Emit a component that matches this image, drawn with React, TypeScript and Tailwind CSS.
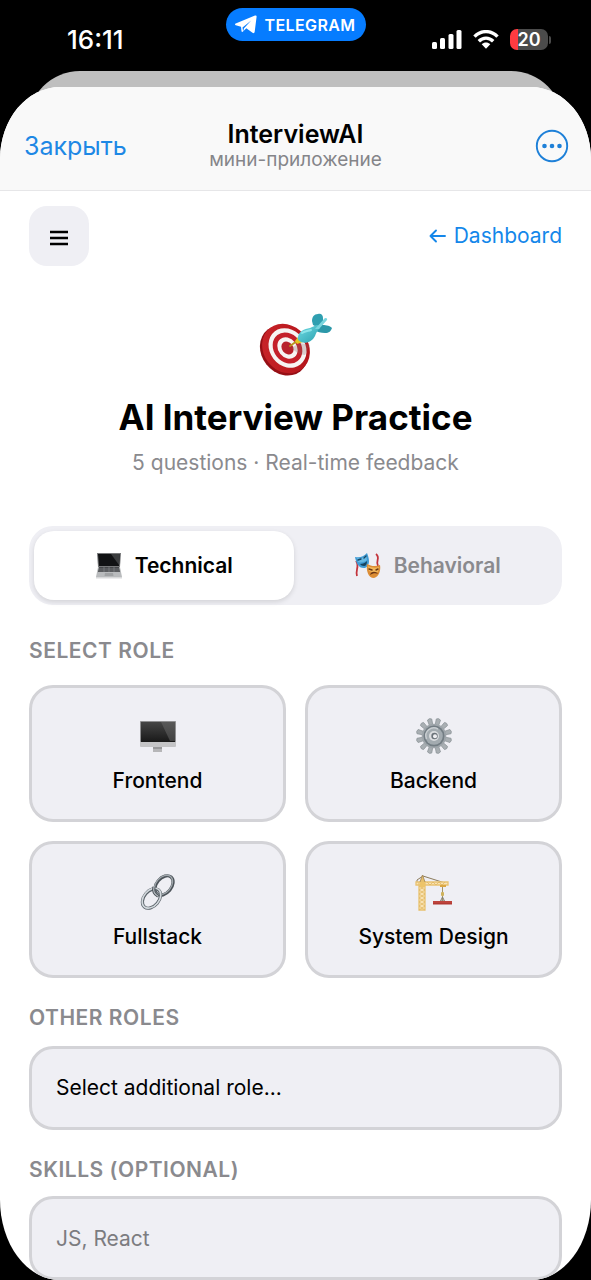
import React from 'react';

function TelegramPlane() {
  return (
    <svg viewBox="0 0 22 19" className="h-[19px] w-[22px]" fill="#fff" aria-hidden="true">
      <path d="M.7 8.600 20 .5c1.200-.4 1.800.2 1.600 1.300l-1.900 15c-.2 1.300-1.100 1.700-2.200 1l-6.200-4.500L8 16.600c-.8.700-1.400.4-1.500-.5L6 11.800l-5.200-1.600c-1-.4-1-1.200-.1-1.600Z" />
      <path d="m7.500 12.500 8.700-7.100-7.200 7.800-.9 3.200Z" fill="#067cff" />
    </svg>
  );
}

function Signal() {
  return (
    <svg viewBox="0 0 30 19" className="h-[19px] w-[30px]" fill="#fff" aria-hidden="true">
      <rect x="0" y="12" width="5" height="7" rx="1.500" />
      <rect x="8" y="8" width="5" height="11" rx="1.500" />
      <rect x="16.500" y="4" width="5" height="15" rx="1.500" />
      <rect x="24.500" y="0" width="5" height="19" rx="1.500" />
    </svg>
  );
}

function Wifi() {
  return (
    <svg viewBox="0 0 26 19" className="h-[19px] w-[26px]" aria-hidden="true">
      <g fill="none" stroke="#fff" strokeWidth="3.400">
        <path d="M1.500 6.700C8-.1 18-.1 24.500 6.700" />
        <path d="M5.800 11.300c4.200-4.200 10.200-4.200 14.400 0" />
      </g>
      <path d="M13 18.700 8.700 14.200c2.500-2.300 6.100-2.300 8.600 0Z" fill="#fff" />
    </svg>
  );
}

function Battery() {
  return (
    <div className="flex items-center gap-px" aria-label="Battery 20 percent">
      <div className="flex h-[21px] w-[38px] items-center justify-center rounded-[7px] bg-[linear-gradient(90deg,#ff3b41_0_8px,#4b4b4b_8px)] text-lg leading-none font-semibold text-white">
        20
      </div>
      <div className="h-2 w-[2px] rounded-r-full bg-[#4b4b4b]" />
    </div>
  );
}

function Dart() {
  return (
    <svg viewBox="0 0 74 64" className="h-16 w-[74px]" aria-hidden="true">
      <defs>
        <linearGradient id="dart-body" x1="0" y1="0" x2="1" y2="1">
          <stop offset="0" stopColor="#6fdce4" />
          <stop offset="1" stopColor="#2ba0ae" />
        </linearGradient>
        <linearGradient id="target-rim" x1="0" y1="0" x2="1" y2="1">
          <stop offset="0" stopColor="#cb262b" />
          <stop offset="1" stopColor="#b01218" />
        </linearGradient>
      </defs>
      <ellipse cx="25" cy="37.500" rx="22.500" ry="26.500" transform="rotate(-38 25 37.500)" fill="#960f15" />
      <ellipse cx="27" cy="35.500" rx="22.500" ry="26" transform="rotate(-38 27 35.500)" fill="url(#target-rim)" />
      <ellipse cx="28.500" cy="35" rx="17.700" ry="21" transform="rotate(-38 28.500 35)" fill="#f7f4f3" />
      <ellipse cx="28.500" cy="35" rx="13.700" ry="16.500" transform="rotate(-38 28.500 35)" fill="#c4202a" />
      <ellipse cx="28.500" cy="35" rx="9.300" ry="11.500" transform="rotate(-38 28.500 35)" fill="#f7f4f3" />
      <ellipse cx="28.500" cy="35" rx="5.500" ry="7" transform="rotate(-38 28.500 35)" fill="#b8202a" />
      <path d="m32 35 9-5 10 2-5 10-6-1Z" fill="#876365" opacity=".28" />
      <path d="m31 33 7-5" stroke="#b5951c" strokeWidth="1.800" strokeLinecap="round" />
      <path d="m36 28 3-4 5 5-6 2Z" fill="#e4c520" />
      <path d="M54 12 53 8c0-4 2-7 6-7 3-1 5 1 5 4v6l-4 4Z" fill="#2f9fb0" />
      <path d="m57 15 5-3c4 0 8 0 11 3-1 3-3 5-7 5-4 0-8-1-11-3Z" fill="#2c98a9" />
      <path d="M39 24c1-6 6-8 12-9 3-1 5-3 8-3l2 3c-3 3-4 5-5 8-3 6-9 8-14 6-2-1-4-3-3-5Z" fill="url(#dart-body)" />
      <path d="m56 16 9-10c1-2 4-1 3 1l-8 9Z" fill="#79d5de" />
      <path d="M43 20c3-2 6-2 9-3" stroke="#a4f1f4" strokeWidth="2" strokeLinecap="round" opacity=".7" fill="none" />
    </svg>
  );
}

function Laptop() {
  return (
    <svg viewBox="0 0 28 28" className="size-7" aria-hidden="true">
      <path d="M2 1h24l-1 14H3Z" fill="#77787a" />
      <path d="M3 2h22l-1 12H4Z" fill="#111214" />
      <path d="m16 2 9 0-1 11Z" fill="#3b3d3f" />
      <path d="M3 15h22l2 10H1Z" fill="#b9bbbd" />
      <path d="M4 15h20l1 5H3Z" fill="#46484b" />
      <path d="M4 17h20M3.500 19h21M9 15v5m5-5v5m5-5v5" stroke="#8b8d90" strokeWidth=".6" />
      <path d="M10 21h8l.5 3h-9Z" fill="#a0a2a4" />
      <path d="M1 25h26v1.500H1Z" fill="#d8d9da" />
    </svg>
  );
}

function Masks() {
  return (
    <svg viewBox="0 0 28 28" className="size-7" aria-hidden="true">
      <path d="M2 9c4 5-1 9 1 15m19-22c5 4-1 7 2 12" fill="none" stroke="#c3343c" strokeWidth="1.800" />
      <path d="M1 5c5 1 8 0 12-4 2 5 4 12-2 15C5 17 2 11 1 5Z" fill="#3f9bd4" />
      <path d="M3 6c4 1 6 0 9-3l1 5c-2 2-6 3-9 2Z" fill="#67b9e3" />
      <path d="m4 8 3-1m3-1 2-2" stroke="#174765" strokeWidth="1.400" strokeLinecap="round" />
      <path d="M6 12c3 0 5-1 7-3 0 3-1 5-3 5s-3-1-4-2Z" fill="#17445f" />
      <path d="M13 12c4 2 8 3 13 1 1 5-1 12-6 13-6 0-8-8-7-14Z" fill="#dc8d35" />
      <path d="M14 14c4 2 8 2 11 1l-1 5c-3 1-7 0-9-1Z" fill="#f2b75a" />
      <path d="m15 17 3 1m4 0 2-1" stroke="#6b3715" strokeWidth="1.400" strokeLinecap="round" />
      <path d="M16 23c1-4 6-4 8-1-2-1-5-1-8 1Z" fill="#6b3715" />
    </svg>
  );
}

function Desktop() {
  return (
    <svg viewBox="0 0 38 36" className="h-9 w-[38px]" aria-hidden="true">
      <defs>
        <linearGradient id="screen" x1="0" y1="0" x2="0" y2="1">
          <stop offset="0" stopColor="#454545" />
          <stop offset="1" stopColor="#191919" />
        </linearGradient>
      </defs>
      <path d="M14 28h9v7h-9Z" fill="#b6b6b8" />
      <rect x="1" y="4" width="36" height="26" rx="1" fill="#c4c4c6" />
      <rect x="1" y="4" width="36" height="21" rx="1" fill="#909092" />
      <path d="M2 5h34v20H2Z" fill="url(#screen)" />
      <path d="M22 5h14v19h-5Z" fill="#707070" opacity=".45" />
      <path d="M14 30h9v2h-9Z" fill="#98989a" />
    </svg>
  );
}

const teeth = [15, 45, 75, 105, 135, 165, 195, 225, 255, 285, 315, 345];

function Gear() {
  return (
    <svg viewBox="0 0 38 38" className="size-[38px]" aria-hidden="true">
      {teeth.map((angle) => (
        <path key={angle} d="M17.300 8 16.800 2Q19 .2 21.200 2L20.700 8Z" fill="#a9afb3" stroke="#8b9297" strokeWidth=".7" transform={`rotate(${angle} 19 19)`} />
      ))}
      <circle cx="19" cy="19" r="12.300" fill="#9ea5aa" />
      <circle cx="19" cy="19" r="10.500" fill="#737d84" />
      <circle cx="19" cy="19" r="8.800" fill="#a3abb0" />
      <path d="M11.500 22A8 8 0 0 1 23 12" fill="none" stroke="#c8cdd1" strokeWidth="1.500" />
      <circle cx="19" cy="19" r="5" fill="#dadcdf" />
      <circle cx="19.500" cy="19" r="3.200" fill="#6b7379" />
      <circle cx="20" cy="19.300" r="2" fill="#efeff2" />
    </svg>
  );
}

function Chain() {
  return (
    <svg viewBox="0 0 38 38" className="size-[38px]" fill="none" aria-hidden="true">
      <ellipse cx="25" cy="12.500" rx="7.500" ry="11" transform="rotate(40 25 12.500)" stroke="#4c5359" strokeWidth="3.200" />
      <ellipse cx="24.500" cy="12" rx="7.500" ry="11" transform="rotate(40 24.500 12)" stroke="#a1a8ad" strokeWidth="1.300" />
      <ellipse cx="12.500" cy="25.500" rx="7.500" ry="11" transform="rotate(40 12.500 25.500)" stroke="#596168" strokeWidth="3.200" />
      <ellipse cx="12.500" cy="25.200" rx="7.700" ry="11.200" transform="rotate(40 12.500 25.200)" stroke="#d3d9dd" strokeWidth="1.600" />
      <path d="M15 14c-1 4 0 7 4 9" stroke="#4c5359" strokeWidth="3.200" />
      <path d="M15 14c-1 4 0 7 4 9" stroke="#b4babf" strokeWidth="1.200" />
    </svg>
  );
}

function Crane() {
  return (
    <svg viewBox="0 0 38 38" className="size-[38px]" fill="none" aria-hidden="true">
      <path d="M2 9V7l6-4 22 7v2" stroke="#8c7c5d" strokeWidth="1" />
      <path d="M4 9h6v28H4Zm-3 0h32v3H1Z" fill="#f8e2b4" stroke="#e9c270" strokeWidth="1.300" />
      <path d="m4 13 6 4-6 4 6 4-6 4 6 4-6 4m6-24-6 4 6 4-6 4 6 4-6 4 6 4M12 9l3 3 3-3 3 3 3-3 3 3 3-3" stroke="#e2b961" strokeWidth=".8" />
      <path d="M5 9 7.500 2 10 9" fill="#e6c06c" stroke="#a08352" strokeWidth=".8" />
      <path d="M5 9h5v5H5Z" fill="#edc46a" />
      <path d="M25 12h6v2h-6Z" fill="#dba743" />
      <path d="M27.500 14v14" stroke="#a29467" />
      <path d="M27.500 24 25.500 28h4Z" stroke="#817e70" />
      <rect x="26" y="19" width="3" height="4" rx="1" fill="#cfb25c" />
      <path d="M18 28h19v3.500H18Z" fill="#b13932" />
      <path d="M18 29h19" stroke="#cb5146" />
    </svg>
  );
}

const roles = [
  { name: 'Frontend', Icon: Desktop },
  { name: 'Backend', Icon: Gear },
  { name: 'Fullstack', Icon: Chain },
  { name: 'System Design', Icon: Crane },
];

const labelStyle = 'block text-[21px] leading-7 font-semibold tracking-wide text-[#8a8a8e] uppercase';
const fieldStyle = 'block h-[84px] w-full appearance-none rounded-3xl border-3 border-[#d3d3d7] bg-[#efeff4] px-6 text-[21px] outline-none';

function StatusBar() {
  return (
    <div className="relative flex h-[71px] shrink-0 items-start justify-between pr-10 pl-[67px] text-white">
      <time className="pt-6 text-[26px] leading-8 font-medium">16:11</time>
      <div className="absolute top-2 left-1/2 flex h-[33px] w-[140px] -translate-x-1/2 items-center justify-center gap-[7px] rounded-full bg-[#067cff]">
        <TelegramPlane />
        <span className="text-base leading-none font-semibold tracking-wide">TELEGRAM</span>
      </div>
      <div className="flex items-center gap-[11px] pt-[29px]">
        <Signal />
        <Wifi />
        <Battery />
      </div>
    </div>
  );
}

export default function App() {
  return (
    <div className="flex min-h-screen flex-col bg-black font-['Inter',sans-serif]">
      <StatusBar />
      <div className="mx-7 -mb-11 h-[60px] shrink-0 rounded-t-[52px] bg-[#bfbfbf]" />
      <div className="relative flex-1 overflow-hidden rounded-t-[60px_72px] rounded-b-[60px_80px] bg-white">
        <header className="grid h-[104px] grid-cols-[1fr_auto_1fr] items-center border-b border-[#e6e6e8] bg-[#f9f9f9] px-6 pt-[14px]">
          <button type="button" className="justify-self-start text-[25px] leading-8 text-[#1e88e5]">Закрыть</button>
          <div className="text-center">
            <div className="text-[25px] leading-7 font-semibold text-black">InterviewAI</div>
            <div className="text-[19px] leading-6 text-[#858589]">мини-приложение</div>
          </div>
          <button type="button" aria-label="More" className="-mr-0.5 justify-self-end">
            <svg viewBox="0 0 34 34" className="size-[34px]" aria-hidden="true">
              <circle cx="17" cy="17" r="15.200" fill="none" stroke="#1e80d8" strokeWidth="1.900" />
              <g fill="#1e80d8">
                <circle cx="9.500" cy="17" r="2.300" />
                <circle cx="17" cy="17" r="2.300" />
                <circle cx="24.500" cy="17" r="2.300" />
              </g>
            </svg>
          </button>
        </header>

        <main className="px-[29px] pt-[15px]">
          <div className="flex items-center justify-between">
            <button type="button" aria-label="Menu" className="flex size-[60px] items-center justify-center rounded-[18px] bg-[#efeff4] pt-1">
              <svg viewBox="0 0 18 16" className="h-4 w-[18px]" aria-hidden="true">
                <path d="M0 2h18M0 8h18M0 14h18" stroke="#000" strokeWidth="2.300" />
              </svg>
            </button>
            <a href="#dashboard" className="flex items-center gap-2 text-[21px] leading-7 text-[#1487ea]">
              <svg viewBox="0 0 17 14" className="h-3.5 w-[17px]" fill="none" stroke="currentColor" strokeWidth="1.900" strokeLinecap="round" strokeLinejoin="round" aria-hidden="true">
                <path d="M16 7H1.500M7 1.500 1.500 7 7 12.500" />
              </svg>
              Dashboard
            </a>
          </div>

          <div className="flex flex-col items-center pt-[47px] text-center">
            <Dart />
            <h1 className="pt-[18px] text-[35px] leading-[44px] font-bold text-black">AI Interview Practice</h1>
            <p className="pt-2 text-[21px] leading-8 text-[#8a8a8e]">5 questions · Real-time feedback</p>
          </div>

          <div role="tablist" className="mt-[47px] grid h-[79px] grid-cols-2 gap-1 rounded-3xl bg-[#efeff4] p-[5px]">
            <button type="button" role="tab" aria-selected="true" className="flex items-center justify-center gap-3 rounded-[20px] bg-white text-[21px] font-semibold text-black shadow-[0_2px_5px_rgba(0,0,0,0.12)]">
              <Laptop />
              Technical
            </button>
            <button type="button" role="tab" aria-selected="false" className="flex items-center justify-center gap-3 text-[21px] font-semibold text-[#8a8a8e]">
              <Masks />
              Behavioral
            </button>
          </div>

          <section className="pt-8">
            <h2 className={labelStyle}>Select role</h2>
            <div className="grid grid-cols-2 gap-[19px] pt-5">
              {roles.map(({ name, Icon }) => (
                <button key={name} type="button" className="flex h-[137px] flex-col items-center justify-center rounded-3xl border-3 border-[#d3d3d7] bg-[#efeff4] pt-1 text-[21px] leading-7 font-medium text-black">
                  <span className="flex h-[50px] items-start">
                    <Icon />
                  </span>
                  {name}
                </button>
              ))}
            </div>
          </section>

          <section className="pt-[26px]">
            <label htmlFor="other-role" className={labelStyle}>Other roles</label>
            <select id="other-role" className={`${fieldStyle} mt-[14px] text-black`}>
              <option>Select additional role...</option>
            </select>
          </section>

          <section className="pt-[26px]">
            <label htmlFor="skills" className={labelStyle}>Skills (optional)</label>
            <input id="skills" type="text" placeholder="JS, React" className={`${fieldStyle} mt-3 text-black placeholder:text-[#7c7c80]`} />
          </section>
        </main>
      </div>
    </div>
  );
}
